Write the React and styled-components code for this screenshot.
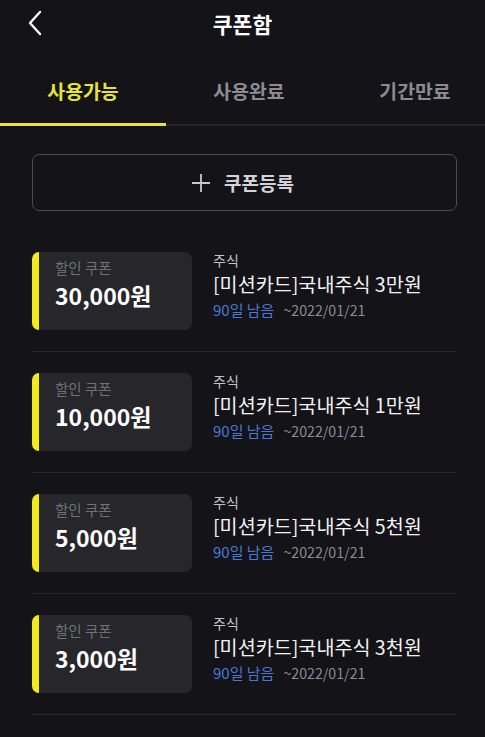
import React from "react";
import styled, { createGlobalStyle } from "styled-components";

const coupons = [
  { amount: "30,000원", title: "[미션카드]국내주식 3만원" },
  { amount: "10,000원", title: "[미션카드]국내주식 1만원" },
  { amount: "5,000원", title: "[미션카드]국내주식 5천원" },
  { amount: "3,000원", title: "[미션카드]국내주식 3천원" },
];

const tabs = ["사용가능", "사용완료", "기간만료"];

const App = () => {
  return (
    <Page>
      <GlobalStyle />
      <Header>
        <BackButton>
          <svg width="16" height="26" viewBox="0 0 16 26" fill="none">
            <path d="M13 2 L3 13 L13 24" stroke="#fff" strokeWidth="2.4" strokeLinecap="round" strokeLinejoin="round" />
          </svg>
        </BackButton>
        <Title>쿠폰함</Title>
      </Header>

      <TabBar>
        {tabs.map((t, i) => (
          <Tab key={t} active={i === 0}>{t}</Tab>
        ))}
      </TabBar>

      <RegisterButton>
        <svg width="20" height="20" viewBox="0 0 20 20">
          <path d="M10 1 V19 M1 10 H19" stroke="#c8c8cc" strokeWidth="1.8" />
        </svg>
        쿠폰등록
      </RegisterButton>

      <List>
        {coupons.map((c) => (
          <Row key={c.amount}>
            <Card>
              <CardLabel>할인 쿠폰</CardLabel>
              <Amount>{c.amount}</Amount>
            </Card>
            <Info>
              <Category>주식</Category>
              <CouponName>{c.title}</CouponName>
              <Meta>
                <Remain>90일 남음</Remain>
                <Expire>~2022/01/21</Expire>
              </Meta>
            </Info>
          </Row>
        ))}
      </List>
    </Page>
  );
};

const GlobalStyle = createGlobalStyle`
  html, body {
    margin: 0;
    background: #131318;
  }
  body {
    font-family: "Noto Sans CJK KR", "Noto Sans", sans-serif;
    color: #fff;
  }
`;

const Page = styled.div`
  width: 485px;
  height: 737px;
  overflow: hidden;
  background: #131318;
`;

const Header = styled.div`
  position: relative;
  display: flex;
  align-items: center;
  justify-content: center;
  height: 46px;
`;

const BackButton = styled.div`
  position: absolute;
  left: 27px;
  top: 10px;
  display: flex;
`;

const Title = styled.h1`
  margin: 0;
  font-size: 21.5px;
  font-weight: 700;
  color: #fff;
`;

const TabBar = styled.div`
  display: flex;
  box-shadow: inset 0 -2px 0 #24242a;
  overflow: hidden;
`;

const Tab = styled.div`
  flex: 0 0 166px;
  height: 80px;
  box-sizing: border-box;
  padding-top: 11px;
  display: flex;
  align-items: center;
  justify-content: center;
  font-size: 19.4px;
  font-weight: 700;
  color: ${(p) => (p.active ? "#e6e43a" : "#8b8b90")};
  border-bottom: 3px solid ${(p) => (p.active ? "#e8e43a" : "transparent")};
`;

const RegisterButton = styled.div`
  margin: 28px 28px 0 32px;
  height: 57px;
  box-sizing: border-box;
  border: 1.5px solid #4c4c53;
  border-radius: 7px;
  display: flex;
  align-items: center;
  justify-content: center;
  gap: 13px;
  font-size: 19px;
  font-weight: 700;
  color: #d4d4d8;
  padding-right: 4px;
`;

const List = styled.div`
  margin: 20px 28px 0 32px;
`;

const Row = styled.div`
  display: flex;
  align-items: flex-start;
  padding: 21px 0;
  border-bottom: 1px solid #25252b;
`;

const Card = styled.div`
  flex: 0 0 160px;
  height: 78px;
  box-sizing: border-box;
  background: #26262b;
  border-radius: 7px;
  border-left: 7px solid #f2ea1c;
  padding: 6px 0 0 16px;
  display: flex;
  flex-direction: column;
`;

const CardLabel = styled.div`
  font-size: 14.5px;
  line-height: 20px;
  color: #707076;
`;

const Amount = styled.div`
  font-size: 23px;
  line-height: 32px;
  font-weight: 600;
  color: #fff;
  margin-top: 1px;
`;

const Info = styled.div`
  margin-left: 21px;
  display: flex;
  flex-direction: column;
`;

const Category = styled.div`
  font-size: 14px;
  line-height: 18px;
  color: #c4c4c8;
  margin-top: -1px;
`;

const CouponName = styled.div`
  font-size: 19.6px;
  line-height: 28px;
  color: #f2f2f4;
  margin-top: 1px;
`;

const Meta = styled.div`
  display: flex;
  align-items: baseline;
  gap: 9px;
  margin-top: 2px;
  font-size: 15px;
  line-height: 20px;
`;

const Remain = styled.span`
  color: #4a78d2;
`;

const Expire = styled.span`
  color: #8d8d92;
  font-size: 14.2px;
`;

export default App;
